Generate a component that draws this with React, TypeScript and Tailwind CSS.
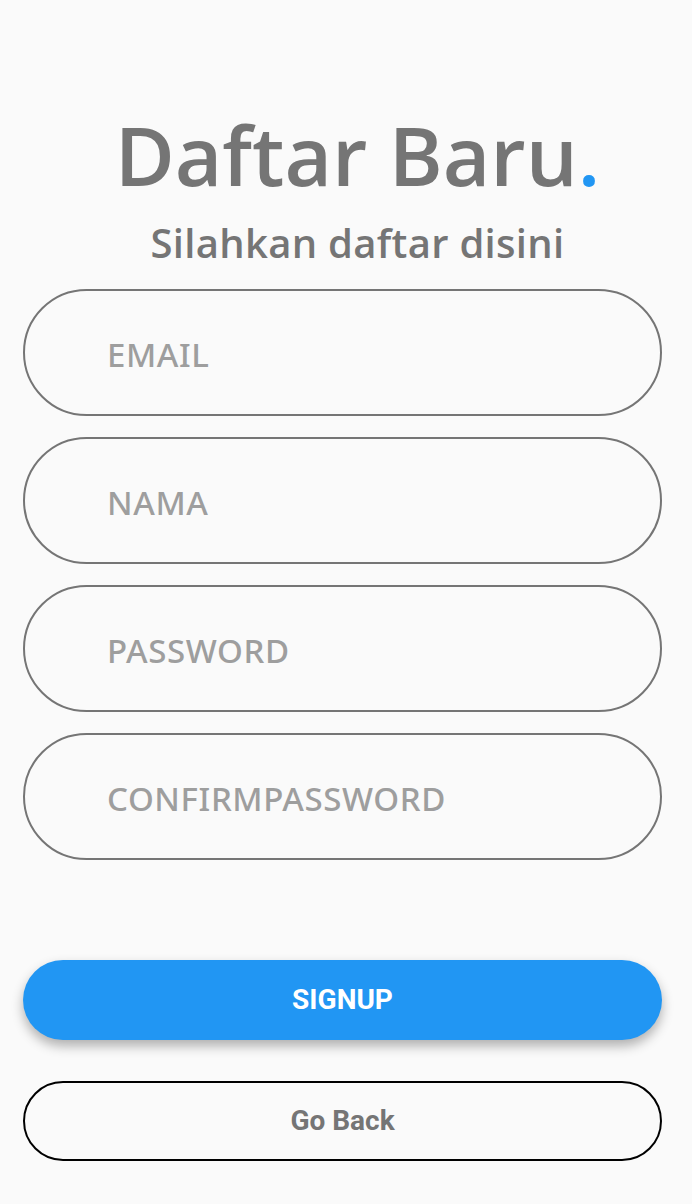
import React from 'react';

const FIELDS = ['EMAIL', 'NAMA', 'PASSWORD', 'CONFIRMPASSWORD'];

const App: React.FC = () => {
  return (
    <div className="min-h-[1204px] w-full bg-[#fafafa] pl-[23px] pr-[30px] pt-[113px]">
      {/* Heading */}
      <div className="flex flex-col items-center pl-[30px]" style={{ fontFamily: '"Open Sans", "Noto Sans", sans-serif' }}>
        <h1 className="text-[82px] leading-none font-semibold text-[#757575]">
          Daftar Baru<span className="text-[#2196f3]">.</span>
        </h1>
        <p className="mt-[28px] text-[40px] leading-none font-semibold tracking-[0.3px] text-[#757575]">
          Silahkan daftar disini
        </p>
      </div>

      {/* Form fields */}
      <div className="mt-[26px] flex flex-col gap-[21px]">
        {FIELDS.map((label) => (
          <div
            key={label}
            className="flex h-[127px] items-center rounded-full border-2 border-[#757575] pl-[82px] pt-[4px]"
          >
            <input
              type="text"
              placeholder={label}
              className="w-full bg-transparent text-[33px] font-medium tracking-[0.6px] text-[#757575] outline-none placeholder:text-[#9e9e9e] font-['Noto_Sans',sans-serif]"
            />
          </div>
        ))}
      </div>

      {/* Actions */}
      <button className="mt-[100px] flex h-[80px] w-full items-center justify-center rounded-full bg-[#2196f3] text-[28px] font-bold text-white shadow-[0_6px_12px_rgba(0,0,0,0.3)] font-['Roboto',sans-serif]">
        SIGNUP
      </button>
      <button className="mt-[41px] flex h-[80px] w-full items-center justify-center rounded-full border-2 border-black text-[28px] font-bold text-[#757575] font-['Roboto',sans-serif]">
        Go Back
      </button>
    </div>
  );
};

export default App;
